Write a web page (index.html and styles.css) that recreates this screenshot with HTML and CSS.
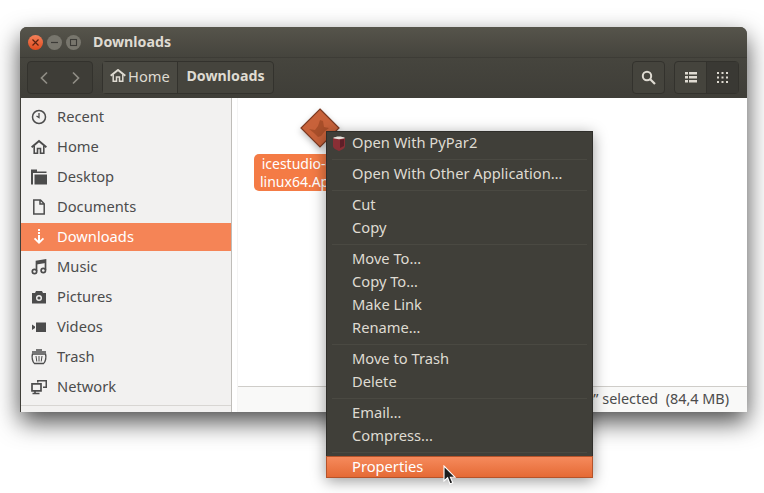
FILE: index.html
```html
<!DOCTYPE html>
<html lang="en">
<head>
  <meta charset="UTF-8">
  <title>Downloads</title>
  <link rel="stylesheet" href="styles.css">
</head>
<body>

  <div class="window">
    <header class="titlebar">
      <span class="win-btn win-close">
        <svg width="9" height="9" viewBox="0 0 9 9"><path d="M1.500 1.500l6 6M7.500 1.500l-6 6" stroke="#5a2210" stroke-width="1.200"/></svg>
      </span>
      <span class="win-btn win-min">
        <svg width="9" height="9" viewBox="0 0 9 9"><path d="M1 4.500h7" stroke="#3c3b37" stroke-width="1.200"/></svg>
      </span>
      <span class="win-btn win-max">
        <svg width="9" height="9" viewBox="0 0 9 9"><rect x="1.500" y="1.500" width="6" height="6" fill="none" stroke="#3c3b37" stroke-width="1.100"/></svg>
      </span>
      <span class="win-title">Downloads</span>
    </header>

    <div class="toolbar">
      <div class="btn-group nav-group">
        <span class="tool-btn nav-btn">
          <svg width="10" height="14" viewBox="0 0 10 14"><path d="M8 1.500L2.500 7 8 12.500" fill="none" stroke="#8f8d85" stroke-width="1.700"/></svg>
        </span>
        <span class="tool-btn nav-btn">
          <svg width="10" height="14" viewBox="0 0 10 14"><path d="M2 1.500L7.500 7 2 12.500" fill="none" stroke="#8f8d85" stroke-width="1.700"/></svg>
        </span>
      </div>

      <div class="btn-group path-group">
        <span class="tool-btn path-home">
          <svg width="16" height="13" viewBox="0 0 16 13"><path d="M.7 6.800L8 1l7.300 5.800" fill="none" stroke="#dfdbd2" stroke-width="2"/><path d="M3.200 5.500v6.700h3.300V8h3v4.200h3.300V5.500" fill="none" stroke="#dfdbd2" stroke-width="1.500"/></svg>
          Home
        </span>
        <span class="tool-btn path-current">Downloads</span>
      </div>

      <div class="toolbar-right">
        <span class="btn-group tool-btn search-btn">
          <svg width="15" height="15" viewBox="0 0 15 15"><circle cx="6" cy="6" r="4.200" fill="none" stroke="#dfdbd2" stroke-width="2"/><path d="M9 9l5 5" stroke="#dfdbd2" stroke-width="2.200"/></svg>
        </span>
        <div class="btn-group view-group">
          <span class="tool-btn view-btn">
            <svg width="12" height="11" viewBox="0 0 12 11"><path d="M0 0h3v2.500H0zM4 0h8v2.500H4zM0 4h3v2.500H0zM4 4h8v2.500H4zM0 8h3v2.500H0zM4 8h8v2.500H4z" fill="#dfdbd2"/></svg>
          </span>
          <span class="tool-btn view-btn view-active">
            <svg width="11" height="11" viewBox="0 0 11 11"><path d="M0 0h2v2H0zM4.500 0h2v2h-2zM9 0h2v2H9zM0 4.500h2v2H0zM4.500 4.500h2v2h-2zM9 4.500h2v2H9zM0 9h2v2H0zM4.500 9h2v2h-2zM9 9h2v2H9z" fill="#dfdbd2"/></svg>
          </span>
        </div>
      </div>
    </div>

    <div class="body-row">
      <nav class="sidebar">
        <a class="side-item">
          <svg class="side-icon" viewBox="0 0 16 16"><circle cx="8" cy="8" r="6.500" fill="none" stroke="#4c4c4c" stroke-width="1.500"/><path d="M8 4v4.500L5.500 7" fill="none" stroke="#4c4c4c" stroke-width="1.300"/></svg>
          Recent
        </a>
        <a class="side-item">
          <svg class="side-icon" viewBox="0 0 16 16"><path d="M.6 8.200L8 2l7.400 6.200" fill="none" stroke="#4c4c4c" stroke-width="2"/><path d="M3.200 7v7.200h3.300V9.500h3v4.700h3.300V7" fill="none" stroke="#4c4c4c" stroke-width="1.600"/></svg>
          Home
        </a>
        <a class="side-item">
          <svg class="side-icon" viewBox="0 0 16 16"><path d="M0 .5h6v2h9.500V4H2v11.500H0zM3.500 5.500H16v10H3.500z" fill="#4c4c4c"/></svg>
          Desktop
        </a>
        <a class="side-item">
          <svg class="side-icon" viewBox="0 0 16 16"><path d="M2.800 1h6.700l3.700 3.700v10.300H2.800zM9 1.500V5h3.700" fill="none" stroke="#4c4c4c" stroke-width="1.500"/></svg>
          Documents
        </a>
        <a class="side-item active">
          <svg class="side-icon" viewBox="0 0 16 16"><path d="M7 0h2v2H7zM7 3h2v2H7zM7 6h2v5.500l2.800-2.800 1.300 1.300L8 15 2.900 10l1.300-1.300L7 11.500z" fill="#fff"/></svg>
          Downloads
        </a>
        <a class="side-item">
          <svg class="side-icon" viewBox="0 0 16 16"><path d="M5.500 12V2.500l9-1.500v10" fill="none" stroke="#4c4c4c" stroke-width="1.700"/><path d="M5.500 2.500l9-1.500v3l-9 1.500z" fill="#4c4c4c"/><circle cx="3.500" cy="12.500" r="2.200" fill="none" stroke="#4c4c4c" stroke-width="1.700"/><circle cx="12.300" cy="11.500" r="2.200" fill="none" stroke="#4c4c4c" stroke-width="1.700"/></svg>
          Music
        </a>
        <a class="side-item">
          <svg class="side-icon" viewBox="0 0 16 16"><path fill-rule="evenodd" d="M1 4h3l1-2h6l1 2h3v10.500H1zM8 6a3 3 0 1 0 0 6 3 3 0 0 0 0-6z" fill="#4c4c4c"/><circle cx="8" cy="9" r="1.600" fill="#4c4c4c"/></svg>
          Pictures
        </a>
        <a class="side-item">
          <svg class="side-icon" viewBox="0 0 16 16"><path d="M5 3.500h10v9.500H5zM1 5.500l3 2v1.500l-3 2z" fill="#4c4c4c"/></svg>
          Videos
        </a>
        <a class="side-item">
          <svg class="side-icon" viewBox="0 0 16 16"><path d="M1 3h14M5 1h6" stroke="#4c4c4c" stroke-width="1.500" fill="none"/><path d="M1.500 5c-1 3 0 8 2 9.500h9c2-1.500 3-6.500 2-9.500z" fill="none" stroke="#4c4c4c" stroke-width="1.400"/><path d="M5 7l.8 5.500M8 7v5.500M11 7l-.8 5.500" stroke="#4c4c4c" stroke-width="1"/></svg>
          Trash
        </a>
        <a class="side-item">
          <svg class="side-icon" viewBox="0 0 16 16"><path d="M6 1h10v8h-4V7.500h2.500v-5H7.500v1H6z" fill="#4c4c4c"/><path d="M1 4.800h9v7H1zM4 11.800v2M1.500 14.500h7" fill="none" stroke="#4c4c4c" stroke-width="1.700"/></svg>
          Network
        </a>
        <div class="side-end"></div>
      </nav>

      <main class="content">
        <div class="file-item">
          <svg class="file-icon" width="42" height="42" viewBox="0 0 42 42">
            <path d="M21 1L40 20 21 39 2 20z" fill="#c8623a" stroke="#7c3a22" stroke-width="1.200"/>
            <path d="M10 21l6 1 3-4 2-6 3 1 1 6 5 1-4 3-4 5-3 1-4-4z" fill="#a94f2a"/>
          </svg>
          <span class="file-label">icestudio-0.3.0-rc-<br>linux64.AppImage</span>
        </div>
        <div class="statusbar">“icestudio-0.3.0-rc-linux64.AppImage” selected&nbsp; (84,4 MB)</div>
      </main>
    </div>
  </div>

  <div class="menu">
    <div class="menu-item">
      <svg class="menu-icon" width="14" height="15" viewBox="0 0 14 15"><path d="M1 2h12v8c0 2-3 4-6 5-3-1-6-3-6-5z" fill="#8a2f35"/><path d="M1 2c3-2 9-2 12 0-3 1.500-9 1.500-12 0z" fill="#e6e2dc"/><path d="M8 4l4-1v7l-4 2z" fill="#5e1f28"/></svg>
      Open With PyPar2
    </div>
    <div class="menu-sep"></div>
    <div class="menu-item">Open With Other Application…</div>
    <div class="menu-sep"></div>
    <div class="menu-item">Cut</div>
    <div class="menu-item">Copy</div>
    <div class="menu-sep"></div>
    <div class="menu-item">Move To…</div>
    <div class="menu-item">Copy To…</div>
    <div class="menu-item">Make Link</div>
    <div class="menu-item">Rename…</div>
    <div class="menu-sep"></div>
    <div class="menu-item">Move to Trash</div>
    <div class="menu-item">Delete</div>
    <div class="menu-sep"></div>
    <div class="menu-item">Email…</div>
    <div class="menu-item">Compress...</div>
    <div class="menu-sep"></div>
    <div class="menu-item menu-hover">Properties</div>
  </div>

  <svg class="cursor" width="14" height="21" viewBox="0 0 14 21"><path d="M1 1v15l3.600-3.200L7 19l2.800-1.200-2.400-5.600H12z" fill="#1c1c1c" stroke="#fff" stroke-width="1.100"/></svg>

</body>
</html>
```

FILE: styles.css
```css
* {
  box-sizing: border-box;
}

body {
  margin: 0;
  padding: 27px 0 0 20px;
  height: 493px;
  overflow: hidden;
  background-color: #fff;
  font-family: "Noto Sans", sans-serif;
  font-size: 14.7px;
}

.window {
  width: 727px;
  height: 385px;
  border-radius: 7px 7px 0 0;
  background-color: #3f3e38;
  box-shadow: 0 10px 24px rgba(0,0,0,0.7);
  display: flex;
  flex-direction: column;
}

.titlebar {
  height: 30px;
  flex: none;
  padding-left: 8px;
  display: flex;
  align-items: center;
  gap: 4px;
  border-radius: 7px 7px 0 0;
  background: linear-gradient(#56544b, #45443d);
}

.win-btn {
  width: 15px;
  height: 15px;
  border-radius: 50%;
  display: flex;
  align-items: center;
  justify-content: center;
  background-color: #78766d;
}

.win-close {
  background: linear-gradient(#f4815a, #df4a1d);
}

.win-title {
  margin-left: 8px;
  padding-bottom: 2px;
  font-size: 14.200px;
  font-weight: 700;
  color: #dfdbd2;
}

.toolbar {
  height: 41px;
  flex: none;
  padding: 3px 8px 4px 7px;
  display: flex;
  gap: 9px;
  background: linear-gradient(#46453e, #3f3e38);
  border-top: 1px solid #3d3c36;
}

.btn-group {
  height: 33px;
  display: flex;
  border: 1px solid #33322d;
  border-radius: 4px;
  background-color: #45443d;
}

.tool-btn {
  display: flex;
  align-items: center;
  justify-content: center;
  color: #dfdbd2;
  padding-bottom: 4px;
}

.nav-group {
  background-color: #3e3d37;
}

.nav-btn {
  width: 32px;
  padding-bottom: 0;
}

.path-home {
  width: 75px;
  gap: 2px;
  border-right: 1px solid #33322d;
  background-color: #4a4942;
}

.path-current {
  width: 95px;
  font-size: 14.200px;
  font-weight: 700;
}

.toolbar-right {
  margin-left: auto;
  display: flex;
  gap: 9px;
}

.search-btn {
  width: 33px;
  padding-bottom: 0;
}

.view-group {
  width: 65px;
}

.view-btn {
  flex: 1;
  padding-bottom: 0;
}

.view-active {
  background-color: #3a3934;
  border-left: 1px solid #33322d;
}

.body-row {
  flex: 1;
  min-height: 0;
  display: flex;
  margin-left: 1px;
  background-color: #fff;
}

.sidebar {
  width: 211px;
  flex: none;
  padding-top: 4px;
  background-color: #f2f1f0;
  border-right: 1px solid #bfbdb9;
  display: flex;
  flex-direction: column;
}

.side-item {
  height: 30px;
  flex: none;
  padding: 0 0 2px 10px;
  display: flex;
  align-items: center;
  gap: 10px;
  color: #4c4c4c;
}

.side-icon {
  width: 16px;
  height: 16px;
  flex: none;
  margin-top: 2px;
}

.side-item.active {
  height: 28px;
  margin: 1px 0;
  background-color: #f58456;
  color: #fff;
}

.side-end {
  margin-top: 3px;
  border-top: 1px solid #d8d6d3;
}

.content {
  flex: 1;
  margin-left: 5px;
  border-left: 1px solid #f4f4f4;
  display: flex;
  flex-direction: column;
  justify-content: space-between;
}

.file-item {
  width: 132px;
  margin: 10px 0 0 16px;
  display: flex;
  flex-direction: column;
  align-items: center;
  gap: 4px;
}

.file-icon {
  filter: drop-shadow(0 3px 3px rgba(0,0,0,0.25));
}

.file-label {
  width: 100%;
  padding-top: 1px;
  border-radius: 5px;
  background-color: #f47b45;
  color: #fff;
  font-size: 14px;
  line-height: 18px;
  text-align: center;
  white-space: nowrap;
}

.statusbar {
  height: 26px;
  padding-right: 18px;
  border-top: 1px solid #cfcdc9;
  background-color: #f9f9f8;
  color: #4c4c4c;
  font-size: 14.400px;
  line-height: 23px;
  text-align: right;
  white-space: nowrap;
}

/* floats over the window */
.menu {
  position: absolute;
  left: 326px;
  top: 131px;
  width: 267px;
  height: 347px;
  background-color: #403f39;
  border: 1px solid #2f2e2a;
  box-shadow: 0 3px 14px rgba(0,0,0,0.4);
  color: #dfdbd2;
}

.menu-item {
  height: 23px;
  padding: 0 0 4px 25px;
  position: relative;
  display: flex;
  align-items: center;
}

.menu-icon {
  position: absolute;
  left: 5px;
  top: 4px;
}

.menu-sep {
  height: 8px;
  margin: 0 5px;
  background: linear-gradient(#4a4942, #4a4942) center / 100% 1px no-repeat;
}

.menu-hover {
  height: 22px;
  margin: 0 -1px;
  padding: 0 0 2px 25px;
  background: linear-gradient(#f68a5c, #e56a35);
  border: 1px solid #b5532a;
  color: #fff;
}

.cursor {
  position: absolute;
  left: 443px;
  top: 465px;
}
```
